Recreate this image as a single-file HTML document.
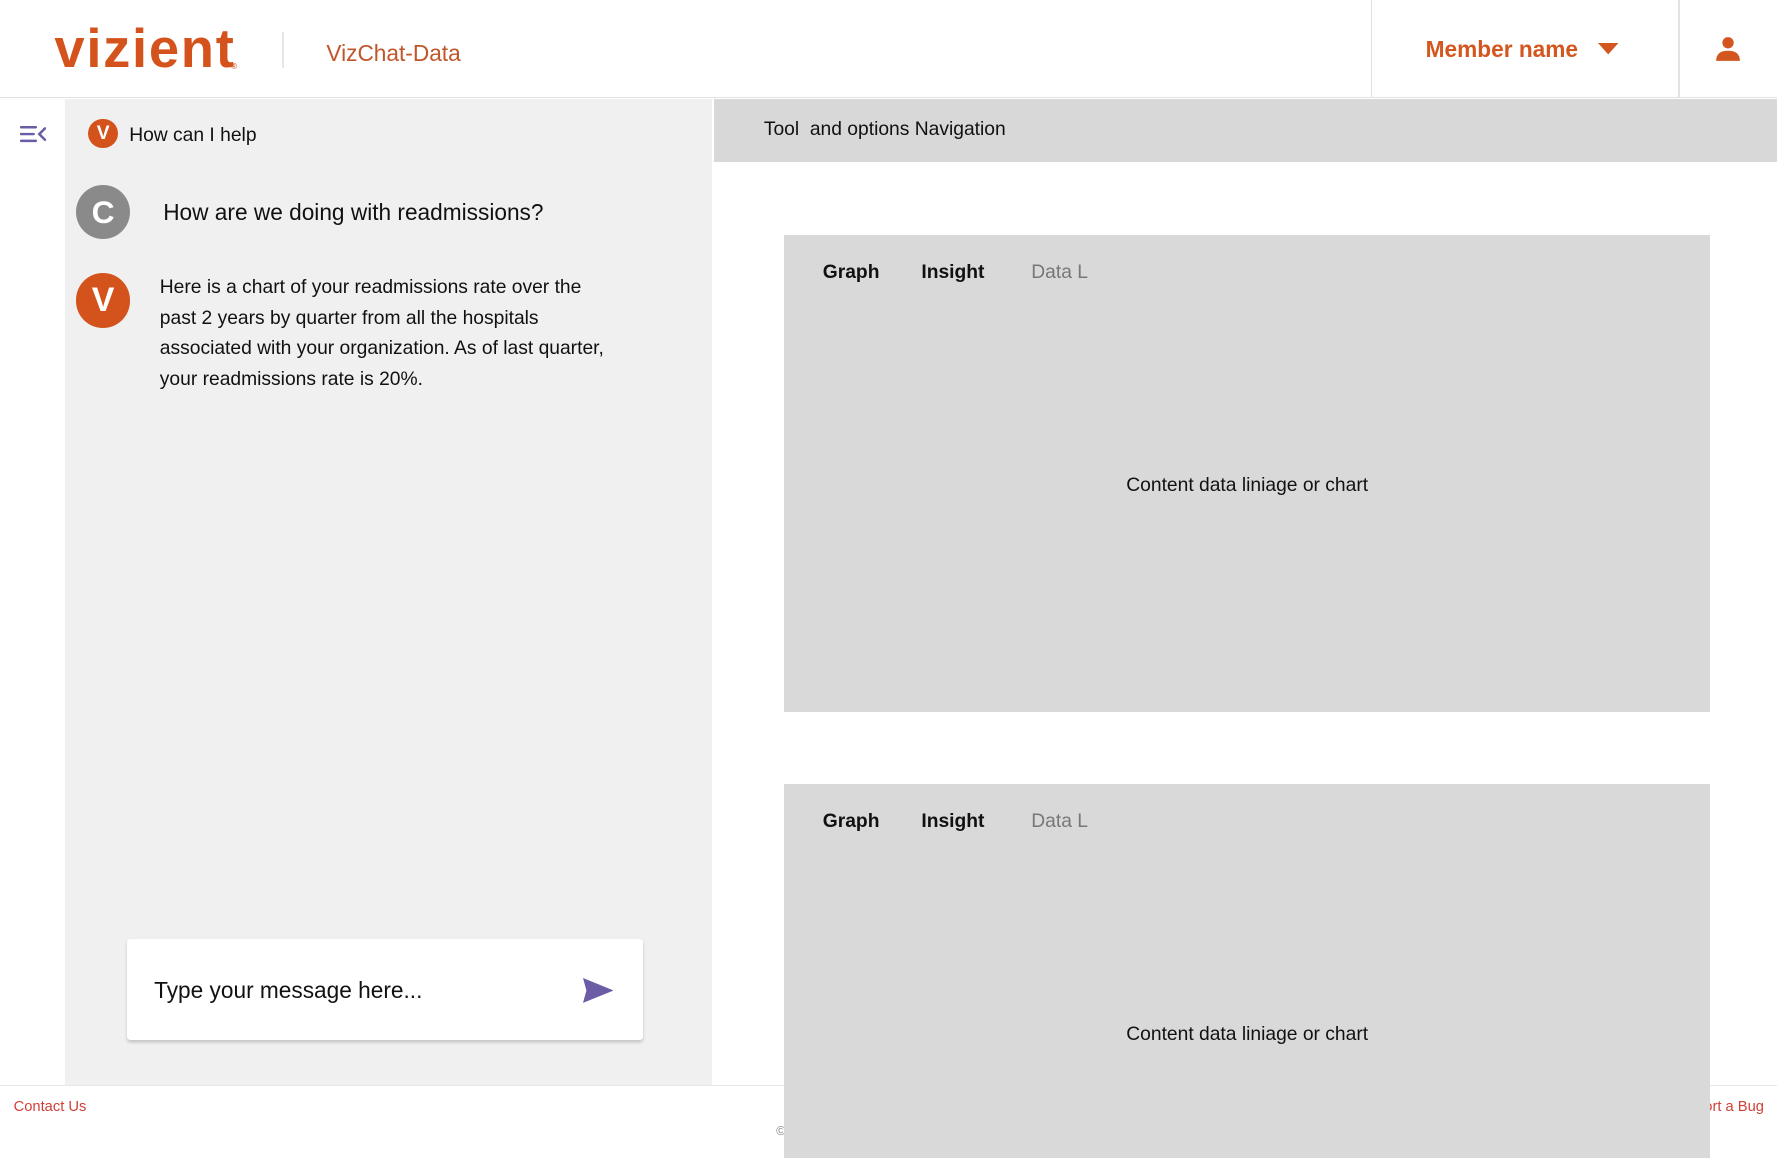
<!DOCTYPE html>
<html><head><meta charset="utf-8"><style>
html,body{margin:0;padding:0}
html{zoom:1.13329}
body{width:1568px;height:1019px;position:relative;overflow:hidden;background:#fff;font-family:"Liberation Sans",sans-serif;color:#111}
.a{position:absolute}
</style></head><body>
<!-- header -->
<div class="a" style="left:0;top:0;width:1568px;height:86px;border-bottom:1px solid #e2e2e2;background:#fff"></div>
<div class="a" style="left:48px;top:15px;font-size:48px;font-weight:bold;letter-spacing:1.5px;color:#d4531c">vizient</div>
<div class="a" style="left:204px;top:55px;font-size:7px;color:#d4531c">®</div>
<div class="a" style="left:249px;top:28px;width:2px;height:32px;background:#e6e6e6"></div>
<div class="a" style="left:288px;top:35px;font-size:20px;color:#c0562a">VizChat-Data</div>
<div class="a" style="left:1210px;top:0;width:1px;height:86px;background:#e2e2e2"></div>
<div class="a" style="left:1481px;top:0;width:1px;height:86px;background:#e2e2e2"></div>
<div class="a" style="left:1258px;top:32px;font-size:20px;font-weight:bold;color:#d4561f">Member name</div>
<svg class="a" style="left:1410px;top:38px" width="18" height="11"><path d="M0 0H18L9 10Z" fill="#d4561f"/></svg>
<svg class="a" style="left:1513px;top:32px" width="23" height="23" viewBox="0 0 23 23"><circle cx="11.5" cy="6" r="5" fill="#d4561f"/><path d="M1 22Q1 13 11.5 13Q22 13 22 22Z" fill="#d4561f"/></svg>
<!-- rail -->
<svg class="a" style="left:18px;top:110px" width="23" height="16" viewBox="0 0 23 16"><g stroke="#6b5ca5" stroke-width="2.2" fill="none" stroke-linecap="round"><path d="M1 2H14M1 8H12M1 14H14M22 3L17 8L22 13"/></g></svg>
<!-- chat panel -->
<div class="a" style="left:57px;top:87px;width:571px;height:870px;background:#f0f0f0"></div>
<div class="a" style="left:78px;top:105px;width:26px;height:26px;border-radius:50%;background:#d4531c;color:#fff;font-weight:bold;font-size:17px;text-align:center;line-height:26px">V</div>
<div class="a" style="left:114px;top:110px;font-size:17px">How can I help</div>
<div class="a" style="left:67px;top:163px;width:48px;height:48px;border-radius:50%;background:#8a8a8a;color:#fff;font-size:28px;font-weight:bold;text-align:center;line-height:48px">C</div>
<div class="a" style="left:144px;top:176px;font-size:20px">How are we doing with readmissions?</div>
<div class="a" style="left:67px;top:241px;width:48px;height:48px;border-radius:50%;background:#d4531c;color:#fff;font-size:30px;font-weight:bold;text-align:center;line-height:48px">V</div>
<div class="a" style="left:141px;top:241px;width:480px;font-size:17px;line-height:27px;white-space:nowrap">Here is a chart of your readmissions rate over the<br>past 2 years by quarter from all the hospitals<br>associated with your organization. As of last quarter,<br>your readmissions rate is 20%.</div>
<div class="a" style="left:112px;top:829px;width:455px;height:89px;background:#fff;border-radius:3px;box-shadow:0 2px 3px rgba(0,0,0,.18)"></div>
<div class="a" style="left:136px;top:862px;font-size:20px">Type your message here...</div>
<svg class="a" style="left:514px;top:863px" width="27" height="22" viewBox="0 0 27 22"><path d="M0 0L27 11L0 22L3 11Z" fill="#6b5ca5"/></svg>
<!-- right -->
<div class="a" style="left:630px;top:87px;width:938px;height:56px;background:#d8d8d8"></div>
<div class="a" style="left:674px;top:105px;font-size:17px;white-space:pre">Tool  and options Navigation</div>
<!-- footer -->
<div class="a" style="left:0;top:957px;width:1568px;height:1px;background:#e8e8e8"></div>
<div class="a" style="left:12px;top:970px;font-size:13px;color:#d0403a">Contact Us</div>
<div class="a" style="left:1480px;top:970px;font-size:13px;color:#d0403a">Report a Bug</div>
<div class="a" style="left:685px;top:992px;font-size:11px;color:#888">©</div>
<div class="a" style="left:692px;top:207px;width:817px;height:421px;background:#d9d9d9"></div>
<div class="a" style="left:726px;top:231px;font-size:17px;font-weight:bold">Graph</div>
<div class="a" style="left:813px;top:231px;font-size:17px;font-weight:bold">Insight</div>
<div class="a" style="left:910px;top:231px;font-size:17px;color:#777">Data L</div>
<div class="a" style="left:692px;top:419px;width:817px;text-align:center;font-size:17px">Content data liniage or chart</div>
<div class="a" style="left:692px;top:692px;width:817px;height:330px;background:#d9d9d9"></div>
<div class="a" style="left:726px;top:716px;font-size:17px;font-weight:bold">Graph</div>
<div class="a" style="left:813px;top:716px;font-size:17px;font-weight:bold">Insight</div>
<div class="a" style="left:910px;top:716px;font-size:17px;color:#777">Data L</div>
<div class="a" style="left:692px;top:904px;width:817px;text-align:center;font-size:17px">Content data liniage or chart</div>
</body></html>
